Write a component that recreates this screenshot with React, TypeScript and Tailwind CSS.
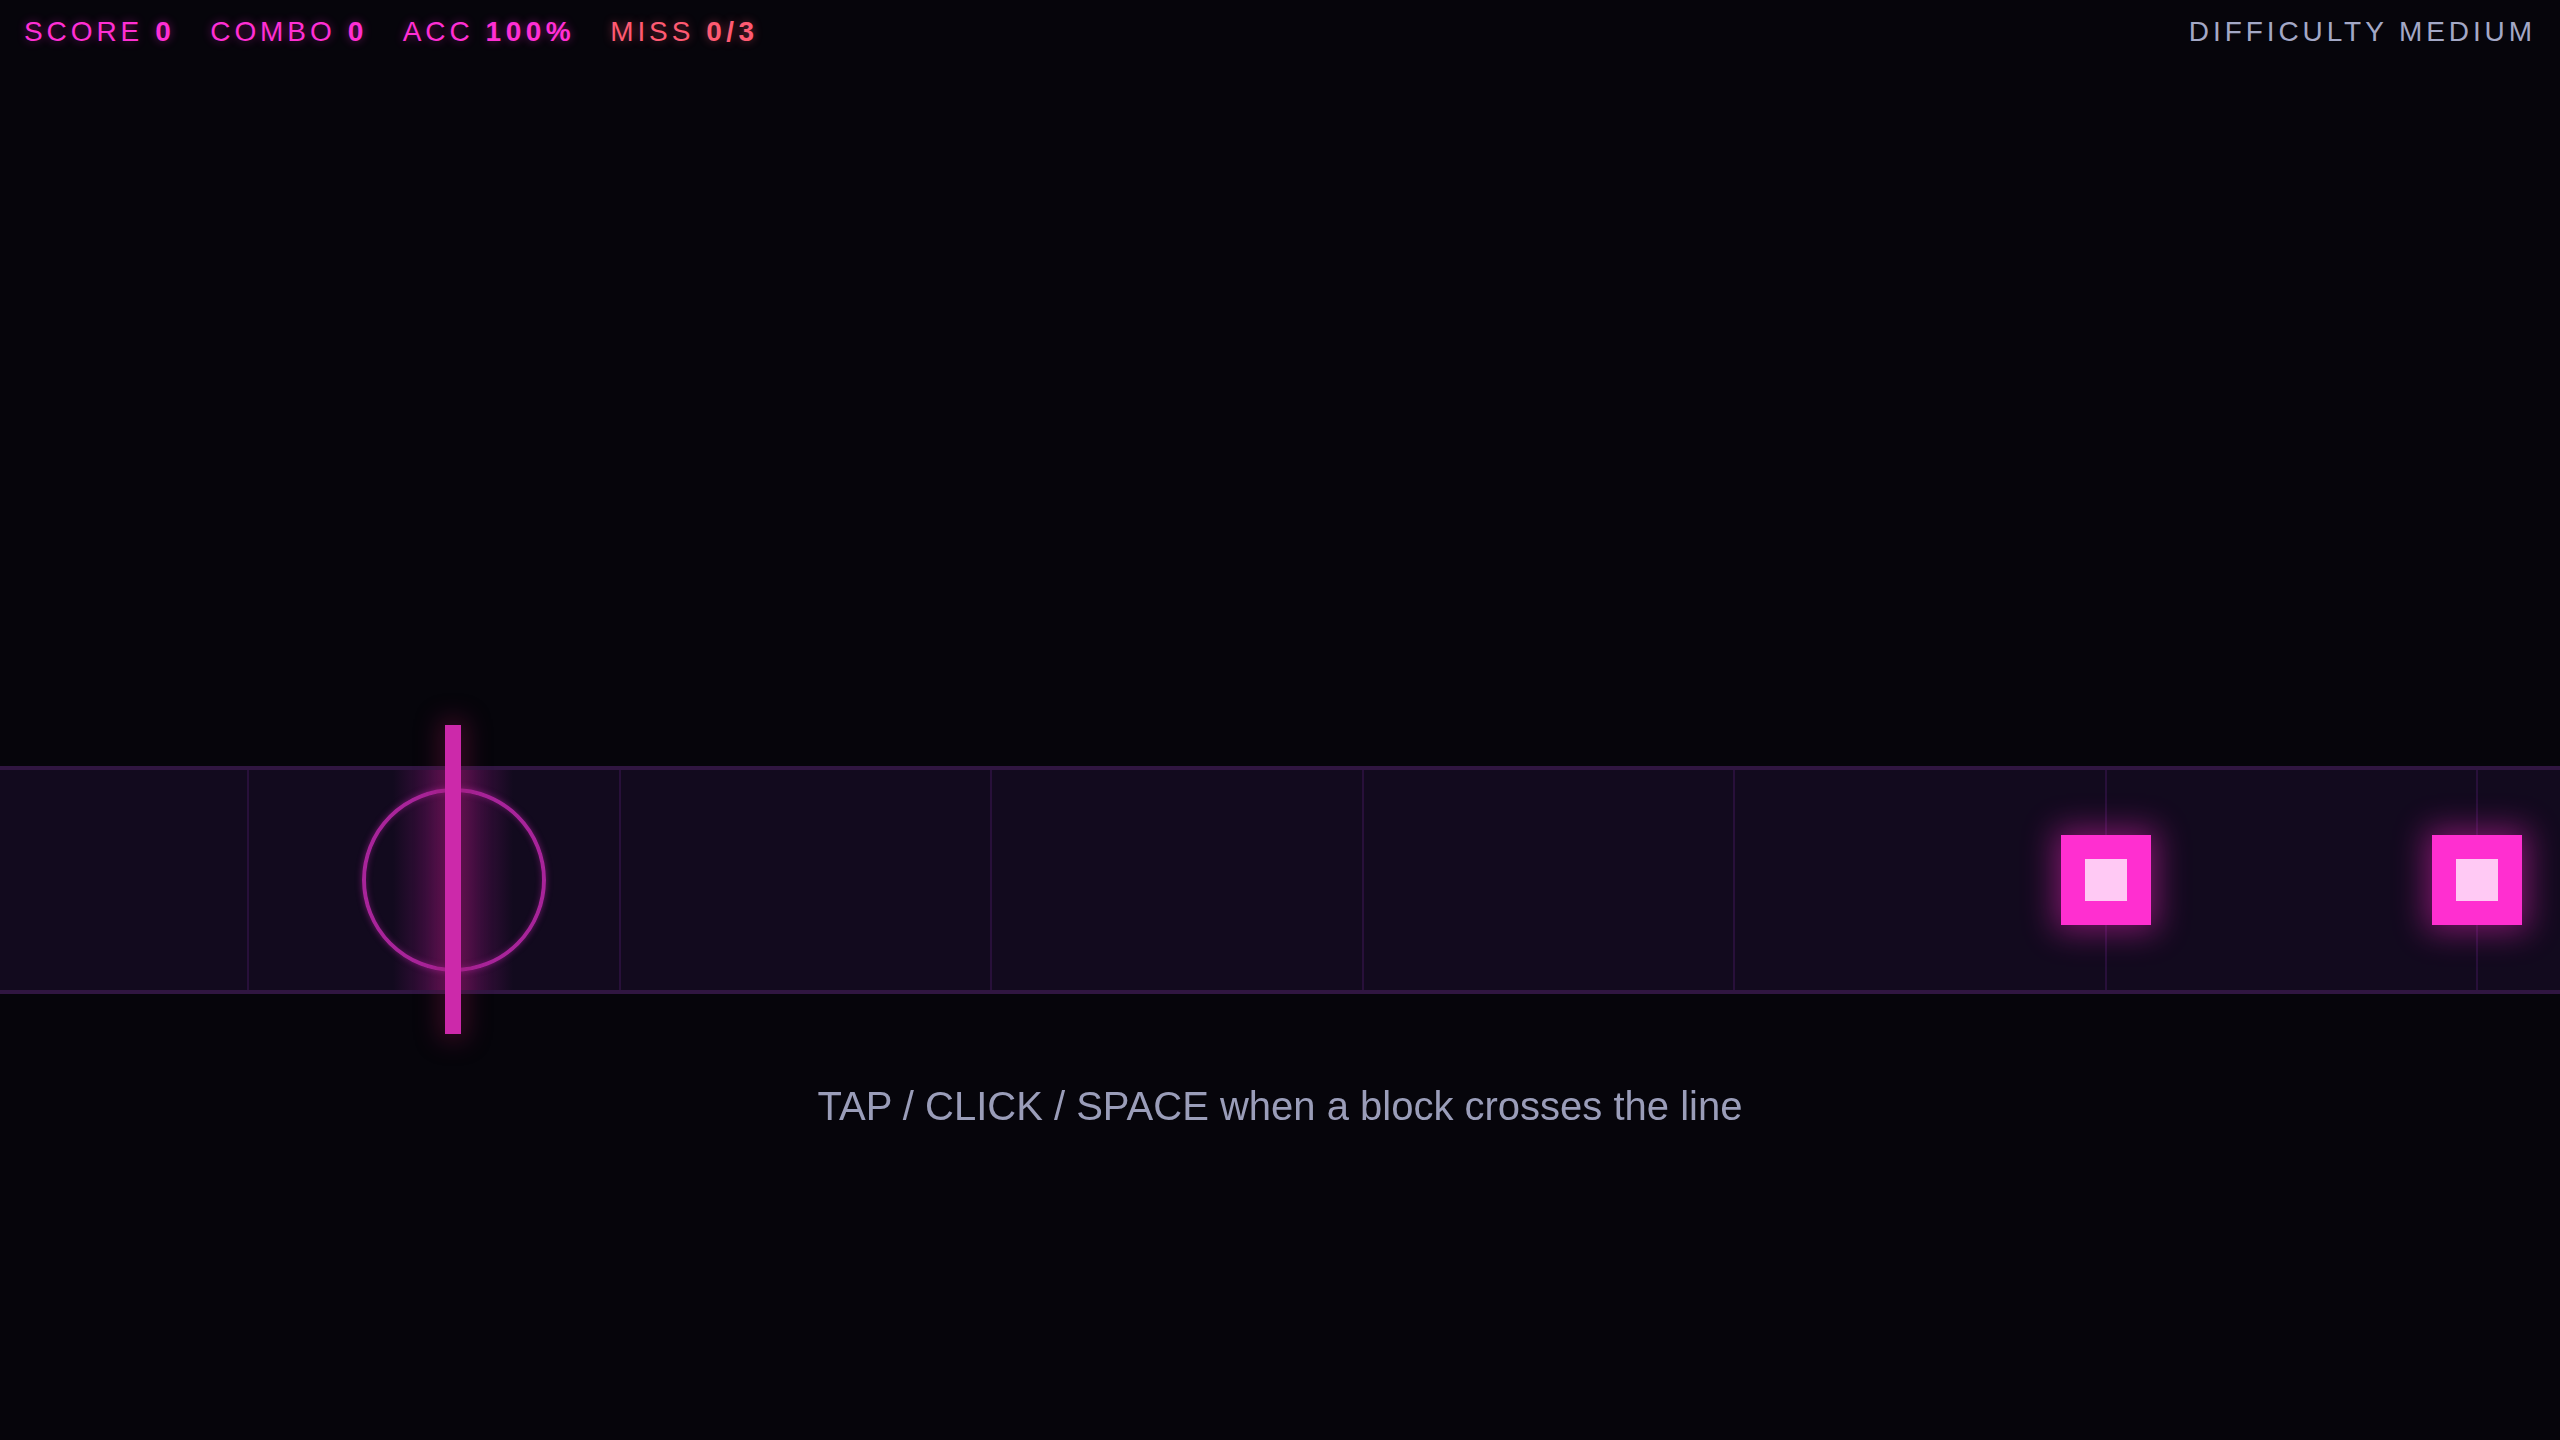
import React from 'react';

type Stat = { label: string; value: string; tone: 'pink' | 'red' };

const stats: Stat[] = [
  { label: 'SCORE', value: '0', tone: 'pink' },
  { label: 'COMBO', value: '0', tone: 'pink' },
  { label: 'ACC', value: '100%', tone: 'pink' },
  { label: 'MISS', value: '0/3', tone: 'red' },
];

// beat grid, in px from the left edge of the track
const GRID_START = 248;
const GRID_STEP = 371.5;
const gridLines = Array.from({ length: 7 }, (_, i) => GRID_START + i * GRID_STEP);

// upcoming notes (centre x)
const notes = [2106, 2477];

const StatItem = ({ stat }: { stat: Stat }) => {
  const color =
    stat.tone === 'red'
      ? 'text-[#ff5a72] [text-shadow:0_0_10px_rgba(255,80,110,0.45)]'
      : 'text-[#ff2fd4] [text-shadow:0_0_10px_rgba(255,40,210,0.45)]';
  return (
    <div className={`flex items-baseline gap-[12px] ${color}`}>
      <span className="tracking-[0.14em]">{stat.label}</span>
      <span className="font-bold tracking-[0.16em]">{stat.value}</span>
    </div>
  );
};

export default function App() {
  return (
    <div className="h-screen w-full overflow-hidden bg-[#06050b] font-['Liberation_Sans',Arial,sans-serif]">
      {/* HUD */}
      <header className="flex items-start justify-between px-6 pt-4 text-[28px] leading-[32px]">
        <div className="flex gap-[35px]">
          {stats.map((s) => (
            <StatItem key={s.label} stat={s} />
          ))}
        </div>
        <div className="tracking-[0.14em] text-[#a3a8c6]">DIFFICULTY MEDIUM</div>
      </header>

      {/* Lane */}
      <div className="relative mt-[718px] h-[228px] border-y-4 border-[#301641] bg-[#120a1e]">
        {gridLines.map((x) => (
          <div
            key={x}
            className="absolute top-0 bottom-0 w-[2px] bg-[#28103a]"
            style={{ left: Math.round(x) - 1 }}
          />
        ))}

        {/* hit line glow */}
        <div className="absolute left-[393px] top-0 bottom-0 w-[120px] bg-[linear-gradient(90deg,transparent,rgba(120,20,110,0.55)_42%,rgba(120,20,110,0.55)_58%,transparent)]" />

        {/* hit ring */}
        <div className="absolute left-[362px] top-[18px] h-[184px] w-[184px] rounded-full border-4 border-[#a8249a] shadow-[0_0_6px_rgba(200,40,180,0.5),inset_0_0_6px_rgba(200,40,180,0.4)]" />

        {/* hit line */}
        <div className="absolute left-[445px] top-[-45px] h-[309px] w-[16px] bg-[#cc29aa] shadow-[0_0_24px_6px_rgba(150,20,80,0.35)]" />

        {notes.map((cx) => (
          <div
            key={cx}
            className="absolute top-[65px] flex h-[90px] w-[90px] items-center justify-center bg-[#ff2fd0] shadow-[0_0_30px_6px_rgba(255,40,200,0.45)]"
            style={{ left: cx - 45 }}
          >
            <div className="h-[42px] w-[42px] bg-[#ffc9f4]" />
          </div>
        ))}
      </div>

      {/* hint */}
      <p className="mt-[88px] text-center text-[40px] leading-[48px] text-[#9a9db9] blur-[0.6px]">
        TAP / CLICK / SPACE when a block crosses the line
      </p>
    </div>
  );
}
